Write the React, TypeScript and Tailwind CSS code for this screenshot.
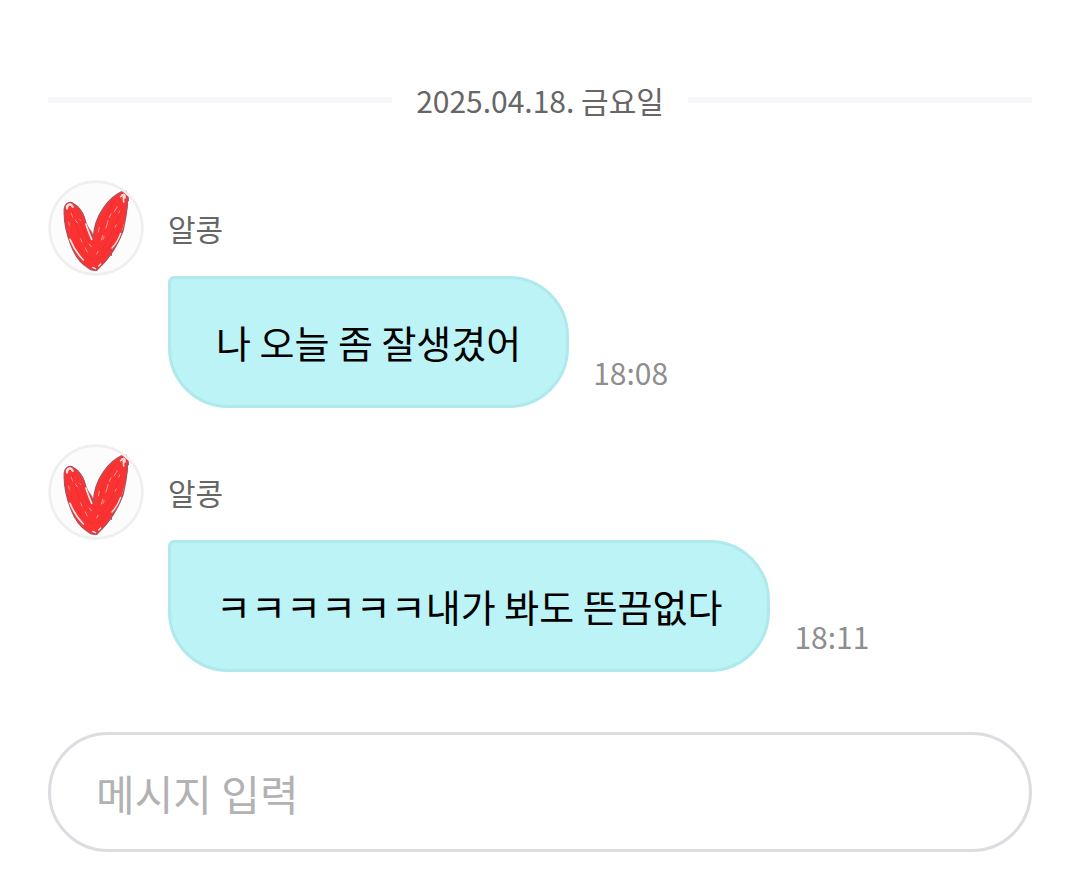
import React from 'react';

interface Message {
  id: number;
  author: string;
  text: string;
  time: string;
}

const messages: Message[] = [
  { id: 1, author: '알콩', text: '나 오늘 좀 잘생겼어', time: '18:08' },
  { id: 2, author: '알콩', text: 'ㅋㅋㅋㅋㅋㅋ내가 봐도 뜬끔없다', time: '18:11' },
];

const HeartAvatar: React.FC = () => (
  <div className="size-24 shrink-0 overflow-hidden rounded-full bg-[#fcfcfc]">
    <svg viewBox="0 0 288 288" className="size-full" fill="none" strokeLinecap="round" strokeLinejoin="round" aria-hidden="true">
      {/* body of the heart */}
      <path
        d="M49 86C50 72 60 65 70 68C88 74 102 90 109 108C115 124 119 144 131 158L137 168C138 142 146 116 160 95C176 68 198 46 226 33C237 32 241 42 241 56C240 80 236 104 228 130C222 162 209 190 194 216C182 236 166 254 146 270C138 276 128 268 117 261C96 248 82 226 70 198C58 168 46 122 49 86Z"
        fill="#fb3232"
      />
      {/* pencil outline, gone over more than once */}
      <g stroke="#b0505c" strokeWidth="4">
        <path d="M49 88C47 122 56 162 69 196C79 222 93 246 116 260C126 268 136 274 146 270" />
        <path d="M49 88C50 72 64 62 75 70C92 80 104 98 109 116C114 136 121 146 131 158L136 178" />
        <path d="M136 178C137 144 147 112 165 86C182 60 204 42 228 32C239 33 241 44 241 62" />
        <path d="M238 60C239 92 231 124 225 152C212 188 192 228 146 271" />
        <path d="M223 152C212 176 204 196 190 216L190 226" />
      </g>
      {/* paper left showing between the strokes */}
      <g stroke="#ffe1dc" strokeWidth="4">
        <path d="M57 85C56 74 68 68 74 80" strokeWidth="7" />
        <path d="M218 50C224 42 232 40 231 54M226 50L227 66" strokeWidth="5" />
        <path d="M114 132C118 148 124 160 131 178" strokeWidth="5" />
        <path d="M66 178C76 202 90 224 106 240" strokeWidth="5" />
        <path d="M218 160C212 178 204 192 192 204" strokeWidth="4" />
        <path d="M134 262L142 266M152 258L158 252" />
      </g>
      <g stroke="#ff9a94" strokeWidth="3">
        <path d="M70 100L75 112M82 120L88 128M94 116L97 122M62 126L64 136" />
        <path d="M180 122L174 144M189 102L184 112M208 80L198 96M216 92L212 100" />
        <path d="M164 166L160 180M168 170L165 178M154 142L151 156M204 134L201 142" />
        <path d="M124 192L130 200M112 204L118 216M150 214L146 222M98 176L102 186" />
      </g>
      <g stroke="#dd3038" strokeWidth="2">
        <path d="M72 92C80 128 92 164 112 196M90 106C98 136 110 162 126 184" />
        <path d="M202 60C174 96 158 136 156 176M222 82C208 124 190 166 164 204" />
        <path d="M82 190C98 216 116 232 138 240M196 174C184 202 166 226 146 242" />
      </g>
      <circle cx="144" cy="144" r="139" stroke="#efefef" strokeWidth="8" />
    </svg>
  </div>
);

const ChatMessage: React.FC<{ message: Message }> = ({ message }) => (
  <li>
    <div className="flex items-center gap-6">
      <HeartAvatar />
      <span className="text-[30px] leading-10 text-[#666]">{message.author}</span>
    </div>
    <div className="ml-30 flex items-end gap-6">
      <p className="rounded-[60px] rounded-tl-md border-3 border-[#afe9eb] bg-[#bbf3f6] px-[45px] py-[35px] text-[38px] leading-14 text-black">
        {message.text}
      </p>
      <time className="shrink-0 pb-4 text-[30px] leading-10 text-[#8e8e8e]">{message.time}</time>
    </div>
  </li>
);

const App: React.FC = () => {
  return (
    <main className="min-h-screen bg-white px-12 pt-20 pb-6 font-['Noto_Sans_CJK_KR',sans-serif]">
      <div className="flex items-center gap-6">
        <div className="h-1.5 flex-1 bg-[#f7f7fb]"></div>
        <time dateTime="2025-04-18" className="text-[30px] leading-10 text-[#666]">
          2025.04.18. 금요일
        </time>
        <div className="h-1.5 flex-1 bg-[#f7f7fb]"></div>
      </div>

      <ul className="mt-15 flex flex-col gap-9">
        {messages.map((message) => (
          <ChatMessage key={message.id} message={message} />
        ))}
      </ul>

      <form className="mt-15" onSubmit={(e) => e.preventDefault()}>
        <input
          type="text"
          aria-label="메시지 입력"
          placeholder="메시지 입력"
          className="h-30 w-full rounded-full border-3 border-[#dcdce1] bg-white px-[45px] text-[42px] text-black outline-none placeholder:text-[#b2b2b2]"
        />
      </form>
    </main>
  );
};

export default App;
